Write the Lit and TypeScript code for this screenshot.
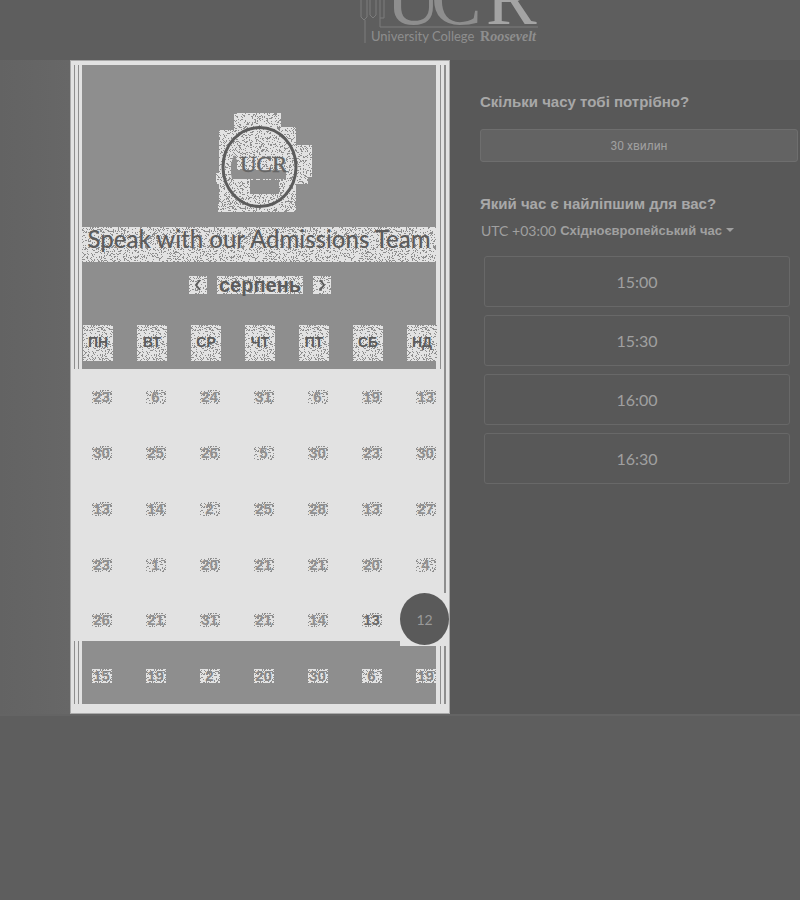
import { LitElement, html, svg, css } from "lit";
import { customElement } from "lit/decorators.js";

const TILE = 96;

/** Deterministic scatter of single-pixel dots for one pattern tile. */
function scatter(density: number): string {
  let seed = 7;
  let d = "";
  for (let y = 0; y < TILE; y++) {
    for (let x = 0; x < TILE; x++) {
      seed = (seed * 1103515245 + 12345) % 2147483648;
      if (seed / 2147483648 < density) d += `M${x} ${y}h1v1h-1z`;
    }
  }
  return d;
}
const FINE = scatter(0.24);
const DENSE = scatter(0.4);

const grain = (id: string, d: string) => svg`
  <pattern id=${id} width=${TILE} height=${TILE} patternUnits="userSpaceOnUse">
    <rect width=${TILE} height=${TILE} fill="#e2e2e2"></rect>
    <path d=${d} fill="#8e8e8e" shape-rendering="crispEdges"></path>
  </pattern>`;

const patch = (kind: "fine" | "dense") => html`
  <svg class="patch" aria-hidden="true"><defs>${grain("g", kind === "fine" ? FINE : DENSE)}</defs>
    <rect width="100%" height="100%" fill="url(#g)"></rect></svg>`;

const WEEKDAYS = ["ПН", "ВТ", "СР", "ЧТ", "ПТ", "СБ", "НД"];
const WEEKS = [
  [23, 6, 24, 31, 6, 19, 13],
  [30, 25, 26, 5, 30, 23, 30],
  [13, 14, 2, 25, 28, 13, 27],
  [23, 1, 20, 21, 21, 20, 4],
  [26, 21, 31, 21, 14, 13, 12],
  [15, 19, 2, 20, 30, 6, 19],
];
const SLOTS = ["15:00", "15:30", "16:00", "16:30"];

@customElement("month-card")
class MonthCard extends LitElement {
  static styles = css`
    :host { display: block; box-sizing: border-box; background: #e2e2e2; border: 1px solid #aaa; color: #5c5c5c;
      font-family: "Liberation Sans", sans-serif; padding-bottom: 9px; }
    .rails { background-image:
      linear-gradient(to right, #e2e2e2 3px, #8e8e8e 3px 4px, #e2e2e2 4px 7px, #8e8e8e 7px 8px, #e2e2e2 8px 11px, transparent 11px),
      linear-gradient(to left, #e2e2e2 3px, #8e8e8e 3px 5px, #e2e2e2 5px 8px, #8e8e8e 8px 9px, #e2e2e2 9px 13px, transparent 13px);
      background-color: #8e8e8e; }
    .head { border-top: 4px solid #e2e2e2; height: 264px; box-sizing: border-box; display: flex; flex-direction: column; align-items: center; }
    .seal { display: block; width: 104px; height: 110px; margin: 43px 0 0 12px; }
    .grained { position: relative; isolation: isolate; display: flex; align-items: center; justify-content: center; }
    .patch { position: absolute; inset: 0; width: 100%; height: 100%; z-index: -1; }
    h1 { margin: 9px 13px 0 11px; align-self: stretch; height: 35px; font: 500 24px/26px Lato, sans-serif; white-space: nowrap; }
    h1 span { padding-bottom: 12px; }
    .month { display: flex; gap: 10px; margin-top: 14px; }
    h2 { margin: 0; width: 86px; height: 18px; font-size: 20px; line-height: 18px; }
    .step { width: 18px; height: 18px; border: 0; padding: 0; background: none; color: inherit; }
    table { width: 100%; border-collapse: collapse; table-layout: fixed; }
    th, td { padding: 0; }
    th { height: 44px; vertical-align: top; font-size: 14px; line-height: 32px; }
    th .grained { width: 30px; height: 36px; margin: 0 auto; }
    th .grained span { padding-bottom: 3px; }
    td { padding-left: 7px; font-size: 15px; font-weight: 700; color: #909090; }
    td .grained { width: 20px; height: 14px; margin: auto; line-height: 14px; }
    .days { background: linear-gradient(to left, transparent 3px, #8e8e8e 3px 5px, transparent 5px); }
    .days td { height: 56px; }
    .days.short td { height: 48px; padding-top: 6px; box-sizing: border-box; }
    .rest td { height: 63px; padding-top: 7px; box-sizing: border-box; color: #868686; }
    td .today { color: #6a6a6a; }
    .days .holder { position: relative; padding: 0; }
    .pick { position: absolute; z-index: 1; right: 0; top: 0; width: 49px; height: 53px; background: #e2e2e2; }
    .pick button { width: 49px; height: 52px; border: 0; border-radius: 50%; padding: 0; background: #5a5a5a; color: #999; font: 14px Lato, sans-serif; }
  `;
  private cell(n: number, row: number, col: number) {
    if (row === 4 && col === 6) {
      return html`<td class="holder"><div class="pick"><button aria-pressed="true">${n}</button></div></td>`;
    }
    return html`<td><div class="grained ${row === 4 && col === 5 ? "today" : ""}">${patch(row === 5 ? "fine" : "dense")}${n}</div></td>`;
  }
  render() {
    return html`
      <div class="head rails">
        <svg class="seal" viewBox="0 0 104 110" role="img" aria-label="UCR">
          <defs>${grain("s", FINE)}</defs>
          <path fill="url(#s)" d="M20 5H67V19H82V37H98V69H94V76H82V104H4V96H5V76H2V65H5V22H20Z"></path>
          <path fill="#8e8e8e" d="M17 66V56L20 47L23 52V62H72V71H18ZM36 72H65V86H36Z"></path>
          <ellipse cx="45.5" cy="59" rx="36.5" ry="39.5" fill="none" stroke="#5c5c5c" stroke-width="3"></ellipse>
          <text x="26" y="64" font-family="Liberation Serif, serif" font-size="23" fill="#656565" stroke="#656565" stroke-width="0.5">UCR</text>
        </svg>
        <h1 class="grained">${patch("fine")}<span>Speak with our Admissions Team</span></h1>
        <div class="month">
          <button class="step grained" aria-label="Попередній місяць">${patch("fine")}<svg width="8" height="12" viewBox="0 0 8 12"><path d="M6 1 2 6 6 11" fill="none" stroke="currentColor" stroke-width="2"></path></svg></button>
          <h2 class="grained">${patch("fine")}серпень</h2>
          <button class="step grained" aria-label="Наступний місяць">${patch("fine")}<svg width="8" height="12" viewBox="0 0 8 12"><path d="M2 1 6 6 2 11" fill="none" stroke="currentColor" stroke-width="2"></path></svg></button>
        </div>
      </div>
      <table>
        <thead><tr class="rails">${WEEKDAYS.map((d) => html`<th scope="col"><div class="grained">${patch("fine")}<span>${d}</span></div></th>`)}</tr></thead>
        <tbody>
          ${WEEKS.map((w, r) => html`<tr class=${r === 5 ? "rails rest" : r === 4 ? "days short" : "days"}>${w.map((n, c) => this.cell(n, r, c))}</tr>`)}
        </tbody>
      </table>`;
  }
}

@customElement("time-panel")
class TimePanel extends LitElement {
  static styles = css`
    :host { display: block; box-sizing: border-box; background: #585858; color: #a8a8a8; padding: 32px 0 0 30px;
      font-family: "Liberation Sans", sans-serif; }
    h2 { margin: 0; font-size: 15px; line-height: 20px; }
    button { display: block; width: 100%; padding: 0; border: 1px solid #686868; border-radius: 3px; background: none; color: #a0a0a0; }
    .length { width: calc(100% - 2px); height: 33px; margin: 17px 0 32px; background: #636363; border-color: #6e6e6e; font: 12px Roboto, sans-serif; }
    .zone { display: flex; align-items: center; gap: 4px; height: 32px; padding-left: 1px; font: 14px Lato, sans-serif; color: #a0a0a0; }
    select { appearance: none; border: 0; padding: 0; margin: 0; background: none; color: inherit; font: bold 13px "Liberation Sans", sans-serif; }
    .slots { list-style: none; margin: 10px 10px 0 4px; padding: 0; display: grid; gap: 8px; }
    .slots button { height: 51px; font: 16px Lato, sans-serif; }
  `;
  render() {
    return html`
      <h2>Скільки часу тобі потрібно?</h2>
      <button class="length">30 хвилин</button>
      <h2>Який час є найліпшим для вас?</h2>
      <div class="zone">
        <label for="tz">UTC +03:00</label>
        <select id="tz"><option>Східноєвропейський час</option></select>
        <svg width="8" height="4" viewBox="0 0 8 4" aria-hidden="true"><path d="M0 0H8L4 4Z" fill="currentColor"></path></svg>
      </div>
      <ul class="slots">${SLOTS.map((s) => html`<li><button>${s}</button></li>`)}</ul>`;
  }
}

@customElement("app-root")
class AppRoot extends LitElement {
  static styles = css`
    :host { display: block; min-height: 100vh; background: #5e5e5e; }
    header { height: 60px; display: flex; justify-content: center; }
    .brand { display: block; width: 190px; height: 50px; margin-left: 100px; }
    main { display: grid; grid-template-columns: 70px minmax(0, 380fr) minmax(0, 350fr); border-bottom: 2px solid #646464; }
    .shade { background: linear-gradient(to right, #636363, #676767); }
  `;
  render() {
    return html`
      <header>
        <svg class="brand" viewBox="355 0 190 50" role="img" aria-label="University College Roosevelt">
          <defs>${grain("r", DENSE)}</defs>
          <g font-family="Liberation Serif, serif" font-size="76" fill="#8e8e8e">
            <text x="386" y="24">U</text><text x="431" y="24">C</text>
            <text x="486" y="24" fill="#a4a4a4">R</text>
          </g>
          <path d="M361 0V17L364 20L367 17V0M365 20V43M370 0V15L373 18L376 15V0M380 0V27H538M384 0V18H380" fill="none" stroke="#7c7c7c"></path>
          <text x="371" y="41" font-family="Lato, sans-serif" font-size="13" fill="#8e8e8e">University College</text>
          <text x="480" y="41" font-family="Liberation Serif, serif" font-size="14" font-weight="bold" fill="#8e8e8e">R<tspan font-style="italic">oosevelt</tspan></text>
        </svg>
      </header>
      <main>
        <div class="shade"></div>
        <month-card></month-card>
        <time-panel></time-panel>
      </main>`;
  }
}
